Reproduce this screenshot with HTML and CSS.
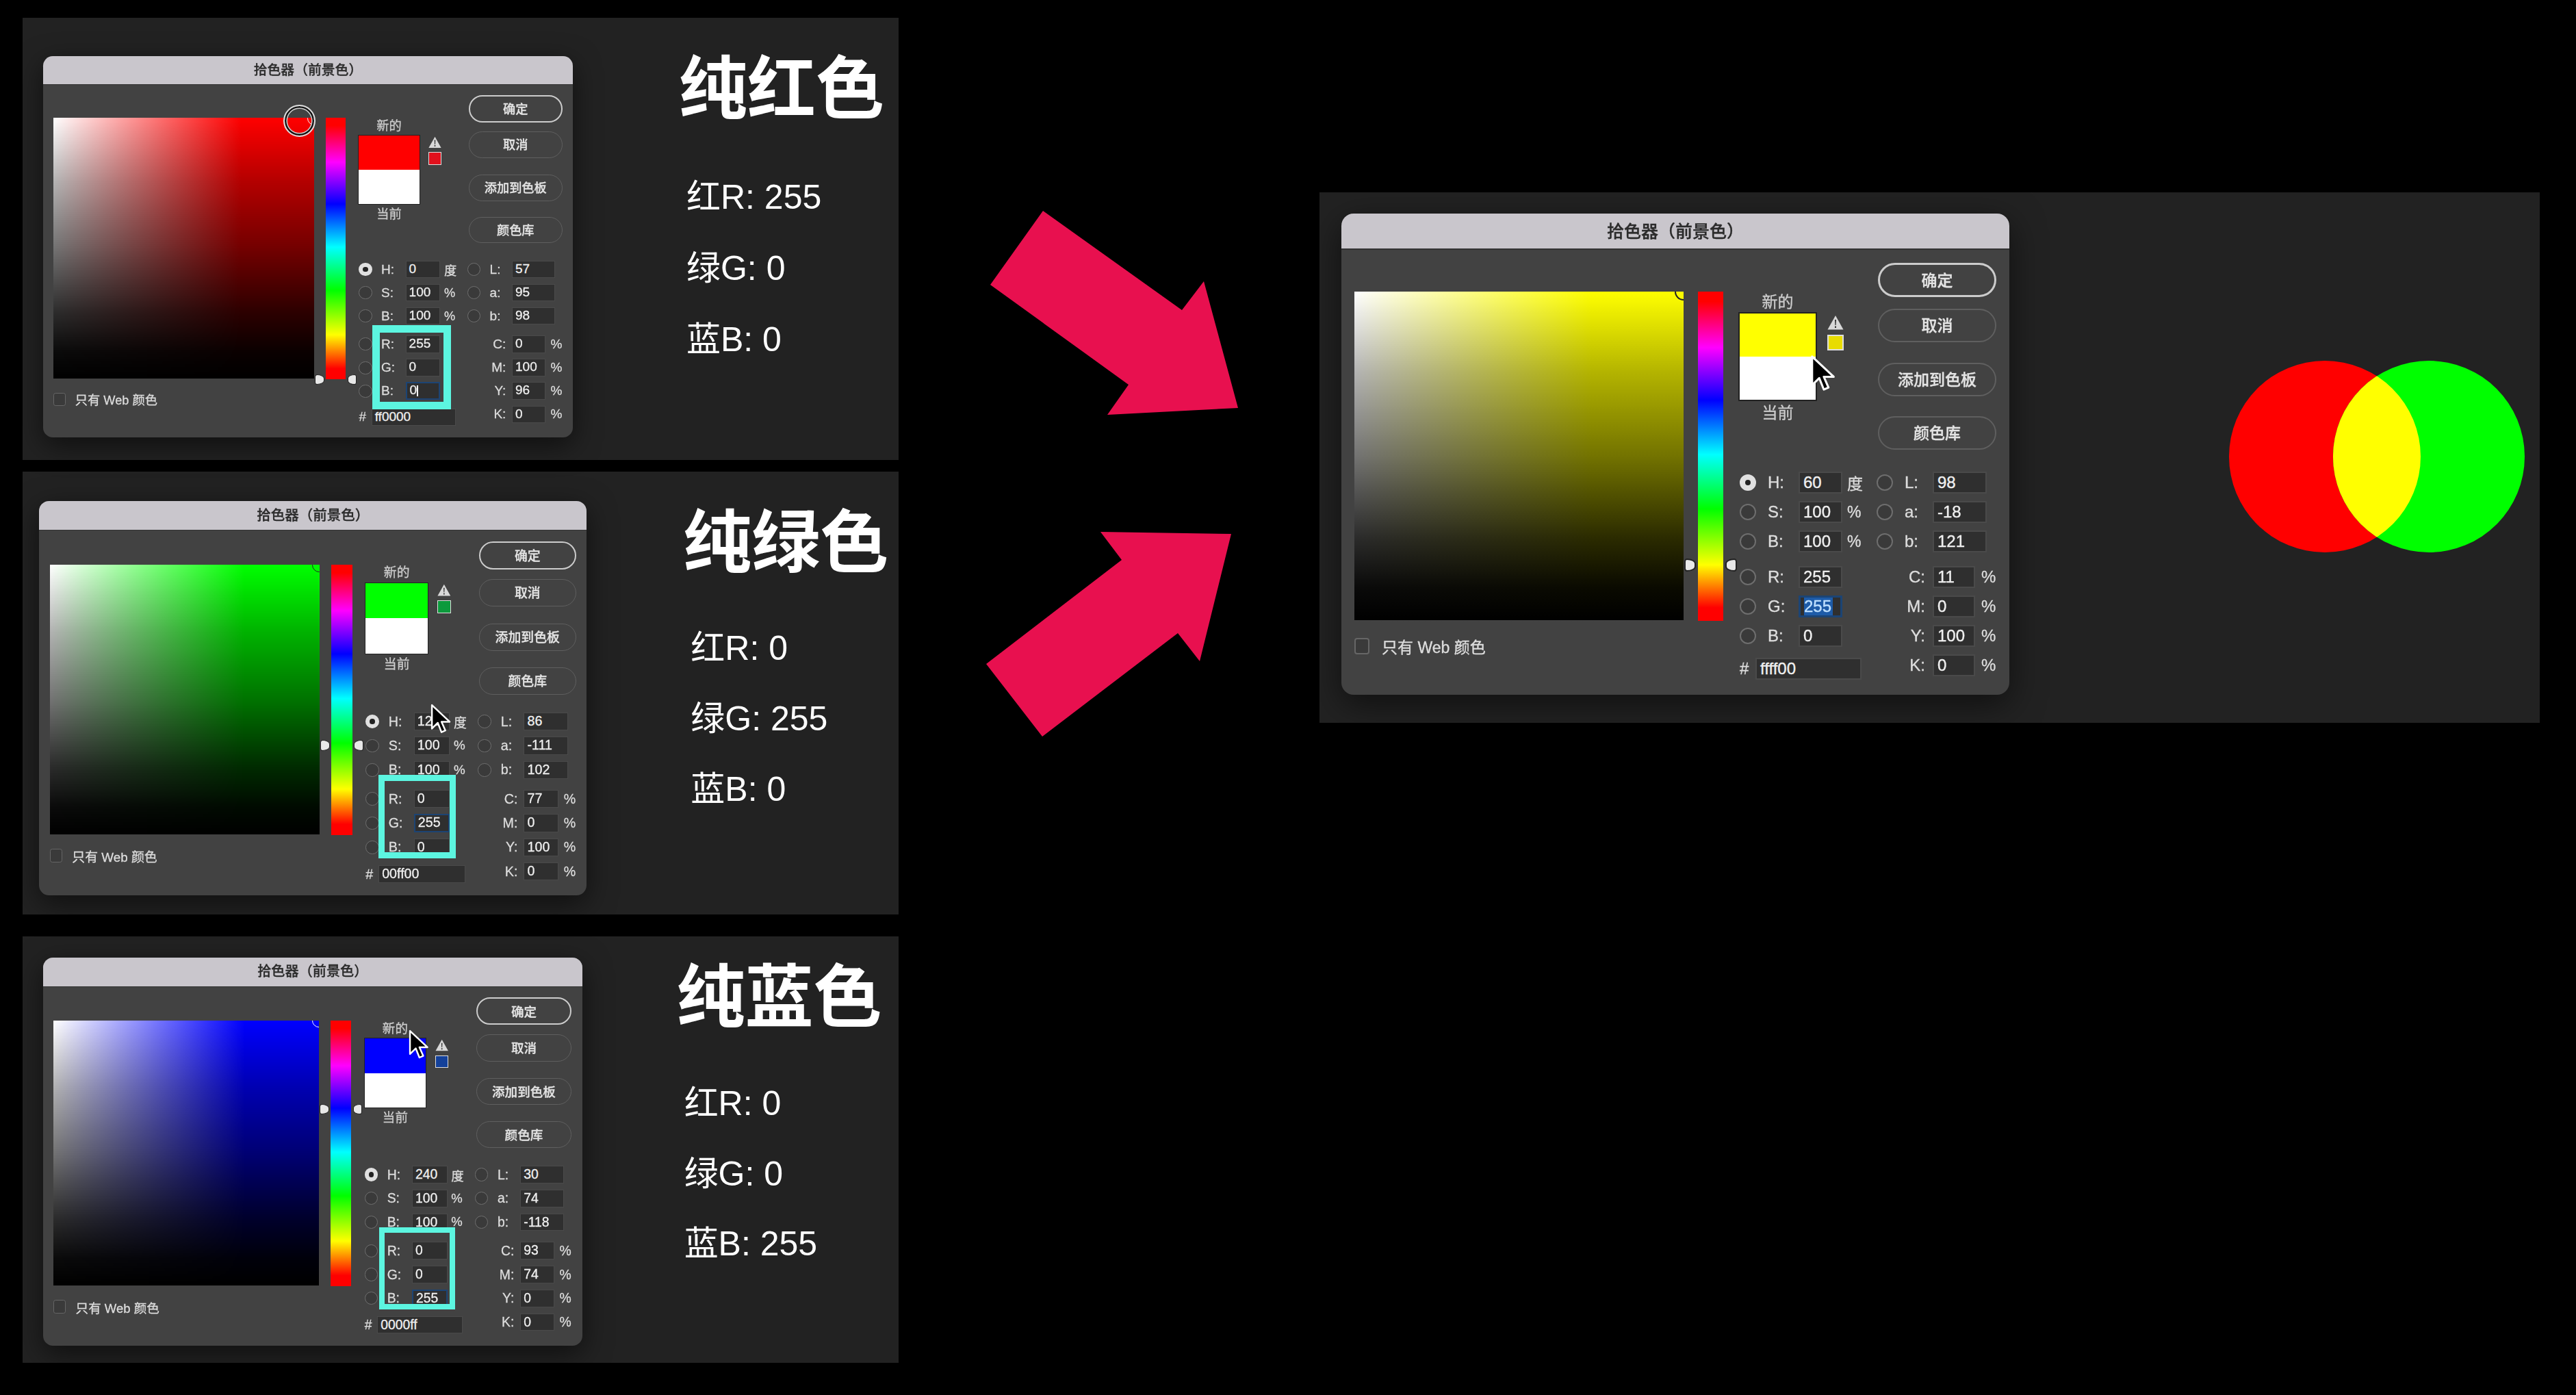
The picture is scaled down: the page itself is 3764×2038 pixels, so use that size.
FILE: index.html
```html
<!DOCTYPE html>
<html lang="zh-CN">
<head>
  <meta charset="UTF-8">
  <title>拾色器</title>
  <link rel="stylesheet" href="styles.css">
</head>
<body>

  <svg width="0" height="0" class="defs">
    <symbol id="warn" viewBox="0 0 24 22"><path d="M12 1 L23.5 21.5 H0.5 Z" fill="#d8d8d8"/><path d="M11 7 H13 L12.6 15 H11.4 Z M11 16.5 H13 V19 H11 Z" fill="#333"/></symbol>
    <symbol id="arrow" viewBox="0 0 20 30"><path d="M2 2 V24 L7.5 18.6 L11 27.4 L14.6 25.8 L11 17.6 H18.6 Z" fill="#000" stroke="#fff" stroke-width="1.6" stroke-linejoin="round"/></symbol>
  </svg>

  <div class="left-col">

    <section class="panel panel-red">
      <div class="slot">
        <div class="dialog dialog-red">
          <div class="titlebar">拾色器（前景色）</div>
          <div class="dlg-body">
            <div class="picker">
              <div class="field field-red"><i class="marker marker-light"></i></div>
              <label class="web"><i class="check"></i>只有 Web 颜色</label>
            </div>
            <div class="hue"><i class="tick tick-l" style="top:100%"></i><i class="tick tick-r" style="top:100%"></i></div>
            <div class="side">
              <div class="side-top">
                <div class="preview">
                  <div class="cap">新的</div>
                  <div class="swatches">
                    <div class="swatch"><div class="swatch-new sw-red"></div><div class="swatch-cur"></div></div>
                    <div class="gamut"><svg class="warn"><use href="#warn"/></svg><i class="gamut-sw g-red"></i></div>
                  </div>
                  <div class="cap cap-b">当前</div>
                </div>
                <div class="buttons">
                  <button class="btn btn-main">确定</button>
                  <button class="btn">取消</button>
                  <button class="btn btn-add">添加到色板</button>
                  <button class="btn btn-lib">颜色库</button>
                </div>
              </div>
              <div class="values">
                <div class="col-l">
                  <div class="row"><i class="radio on"></i><span class="lbl">H:</span><span class="inp">0</span><span class="unit">度</span></div>
                  <div class="row"><i class="radio"></i><span class="lbl">S:</span><span class="inp">100</span><span class="unit">%</span></div>
                  <div class="row"><i class="radio"></i><span class="lbl">B:</span><span class="inp">100</span><span class="unit">%</span></div>
                  <div class="row row-gap"><i class="radio"></i><span class="lbl">R:</span><span class="inp">255</span></div>
                  <div class="row"><i class="radio"></i><span class="lbl">G:</span><span class="inp">0</span></div>
                  <div class="row"><i class="radio"></i><span class="lbl">B:</span><span class="inp focus">0<i class="caret"></i></span></div>
                  <div class="row row-hex"><span class="hash">#</span><span class="inp inp-hex">ff0000</span></div>
                </div>
                <div class="col-r">
                  <div class="row"><i class="radio"></i><span class="lbl lbl-lab">L:</span><span class="inp inp-lab">57</span></div>
                  <div class="row"><i class="radio"></i><span class="lbl lbl-lab">a:</span><span class="inp inp-lab">95</span></div>
                  <div class="row"><i class="radio"></i><span class="lbl lbl-lab">b:</span><span class="inp inp-lab">98</span></div>
                  <div class="row row-gap"><span class="lbl lbl-cmyk">C:</span><span class="inp inp-cmyk">0</span><span class="unit-c">%</span></div>
                  <div class="row"><span class="lbl lbl-cmyk">M:</span><span class="inp inp-cmyk">100</span><span class="unit-c">%</span></div>
                  <div class="row"><span class="lbl lbl-cmyk">Y:</span><span class="inp inp-cmyk">96</span><span class="unit-c">%</span></div>
                  <div class="row"><span class="lbl lbl-cmyk">K:</span><span class="inp inp-cmyk">0</span><span class="unit-c">%</span></div>
                </div>
              </div>
            </div>
          </div>
          <i class="ring"></i>
          <i class="callout callout-red"></i>
        </div>
      </div>
      <div class="info">
        <h2 class="headline">纯红色</h2>
        <p class="line">红R: 255</p>
        <p class="line">绿G: 0</p>
        <p class="line">蓝B: 0</p>
      </div>
    </section>

    <section class="panel panel-green">
      <div class="slot">
        <div class="dialog dialog-green">
          <div class="titlebar">拾色器（前景色）</div>
          <div class="dlg-body">
            <div class="picker">
              <div class="field field-green"><i class="marker"></i></div>
              <label class="web"><i class="check"></i>只有 Web 颜色</label>
            </div>
            <div class="hue"><i class="tick tick-l" style="top:66.7%"></i><i class="tick tick-r" style="top:66.7%"></i></div>
            <div class="side">
              <div class="side-top">
                <div class="preview">
                  <div class="cap">新的</div>
                  <div class="swatches">
                    <div class="swatch"><div class="swatch-new sw-green"></div><div class="swatch-cur"></div></div>
                    <div class="gamut"><svg class="warn"><use href="#warn"/></svg><i class="gamut-sw g-green"></i></div>
                  </div>
                  <div class="cap cap-b">当前</div>
                </div>
                <div class="buttons">
                  <button class="btn btn-main">确定</button>
                  <button class="btn">取消</button>
                  <button class="btn btn-add">添加到色板</button>
                  <button class="btn btn-lib">颜色库</button>
                </div>
              </div>
              <div class="values">
                <div class="col-l">
                  <div class="row"><i class="radio on"></i><span class="lbl">H:</span><span class="inp">120</span><span class="unit">度</span></div>
                  <div class="row"><i class="radio"></i><span class="lbl">S:</span><span class="inp">100</span><span class="unit">%</span></div>
                  <div class="row"><i class="radio"></i><span class="lbl">B:</span><span class="inp">100</span><span class="unit">%</span></div>
                  <div class="row row-gap"><i class="radio"></i><span class="lbl">R:</span><span class="inp">0</span></div>
                  <div class="row"><i class="radio"></i><span class="lbl">G:</span><span class="inp focus">255</span></div>
                  <div class="row"><i class="radio"></i><span class="lbl">B:</span><span class="inp">0</span></div>
                  <div class="row row-hex"><span class="hash">#</span><span class="inp inp-hex">00ff00</span></div>
                </div>
                <div class="col-r">
                  <div class="row"><i class="radio"></i><span class="lbl lbl-lab">L:</span><span class="inp inp-lab">86</span></div>
                  <div class="row"><i class="radio"></i><span class="lbl lbl-lab">a:</span><span class="inp inp-lab">-111</span></div>
                  <div class="row"><i class="radio"></i><span class="lbl lbl-lab">b:</span><span class="inp inp-lab">102</span></div>
                  <div class="row row-gap"><span class="lbl lbl-cmyk">C:</span><span class="inp inp-cmyk">77</span><span class="unit-c">%</span></div>
                  <div class="row"><span class="lbl lbl-cmyk">M:</span><span class="inp inp-cmyk">0</span><span class="unit-c">%</span></div>
                  <div class="row"><span class="lbl lbl-cmyk">Y:</span><span class="inp inp-cmyk">100</span><span class="unit-c">%</span></div>
                  <div class="row"><span class="lbl lbl-cmyk">K:</span><span class="inp inp-cmyk">0</span><span class="unit-c">%</span></div>
                </div>
              </div>
            </div>
          </div>
          <i class="callout callout-green"></i>
          <svg class="cursor cursor-green"><use href="#arrow"/></svg>
        </div>
      </div>
      <div class="info">
        <h2 class="headline">纯绿色</h2>
        <p class="line">红R: 0</p>
        <p class="line">绿G: 255</p>
        <p class="line">蓝B: 0</p>
      </div>
    </section>

    <section class="panel panel-blue">
      <div class="slot">
        <div class="dialog dialog-blue">
          <div class="titlebar">拾色器（前景色）</div>
          <div class="dlg-body">
            <div class="picker">
              <div class="field field-blue"><i class="marker marker-light"></i></div>
              <label class="web"><i class="check"></i>只有 Web 颜色</label>
            </div>
            <div class="hue"><i class="tick tick-l" style="top:33.3%"></i><i class="tick tick-r" style="top:33.3%"></i></div>
            <div class="side">
              <div class="side-top">
                <div class="preview">
                  <div class="cap">新的</div>
                  <div class="swatches">
                    <div class="swatch"><div class="swatch-new sw-blue"></div><div class="swatch-cur"></div></div>
                    <div class="gamut"><svg class="warn"><use href="#warn"/></svg><i class="gamut-sw g-blue"></i></div>
                  </div>
                  <div class="cap cap-b">当前</div>
                </div>
                <div class="buttons">
                  <button class="btn btn-main">确定</button>
                  <button class="btn">取消</button>
                  <button class="btn btn-add">添加到色板</button>
                  <button class="btn btn-lib">颜色库</button>
                </div>
              </div>
              <div class="values">
                <div class="col-l">
                  <div class="row"><i class="radio on"></i><span class="lbl">H:</span><span class="inp">240</span><span class="unit">度</span></div>
                  <div class="row"><i class="radio"></i><span class="lbl">S:</span><span class="inp">100</span><span class="unit">%</span></div>
                  <div class="row"><i class="radio"></i><span class="lbl">B:</span><span class="inp">100</span><span class="unit">%</span></div>
                  <div class="row row-gap"><i class="radio"></i><span class="lbl">R:</span><span class="inp">0</span></div>
                  <div class="row"><i class="radio"></i><span class="lbl">G:</span><span class="inp">0</span></div>
                  <div class="row"><i class="radio"></i><span class="lbl">B:</span><span class="inp focus">255</span></div>
                  <div class="row row-hex"><span class="hash">#</span><span class="inp inp-hex">0000ff</span></div>
                </div>
                <div class="col-r">
                  <div class="row"><i class="radio"></i><span class="lbl lbl-lab">L:</span><span class="inp inp-lab">30</span></div>
                  <div class="row"><i class="radio"></i><span class="lbl lbl-lab">a:</span><span class="inp inp-lab">74</span></div>
                  <div class="row"><i class="radio"></i><span class="lbl lbl-lab">b:</span><span class="inp inp-lab">-118</span></div>
                  <div class="row row-gap"><span class="lbl lbl-cmyk">C:</span><span class="inp inp-cmyk">93</span><span class="unit-c">%</span></div>
                  <div class="row"><span class="lbl lbl-cmyk">M:</span><span class="inp inp-cmyk">74</span><span class="unit-c">%</span></div>
                  <div class="row"><span class="lbl lbl-cmyk">Y:</span><span class="inp inp-cmyk">0</span><span class="unit-c">%</span></div>
                  <div class="row"><span class="lbl lbl-cmyk">K:</span><span class="inp inp-cmyk">0</span><span class="unit-c">%</span></div>
                </div>
              </div>
            </div>
          </div>
          <i class="callout callout-blue"></i>
          <svg class="cursor cursor-blue"><use href="#arrow"/></svg>
        </div>
      </div>
      <div class="info">
        <h2 class="headline">纯蓝色</h2>
        <p class="line">红R: 0</p>
        <p class="line">绿G: 0</p>
        <p class="line">蓝B: 255</p>
      </div>
    </section>

  </div>

  <svg class="arrows" width="450" height="830" viewBox="0 0 450 830">
    <path d="M124 38 L327 183 L359 141 L409 326 L218 336 L249 292 L47 146 Z" fill="#e8104f"/>
    <path d="M208 507 L399 510 L353 696 L321 655 L123 806 L41 700 L239 548 Z" fill="#e8104f"/>
  </svg>

  <section class="panel panel-main">
    <div class="dialog">
      <div class="titlebar">拾色器（前景色）</div>
      <div class="dlg-body">
        <div class="picker">
          <div class="field field-yellow"><i class="marker"></i></div>
          <label class="web"><i class="check"></i>只有 Web 颜色</label>
        </div>
        <div class="hue"><i class="tick tick-l" style="top:83%"></i><i class="tick tick-r" style="top:83%"></i></div>
        <div class="side">
          <div class="side-top">
            <div class="preview">
              <div class="cap">新的</div>
              <div class="swatches">
                <div class="swatch"><div class="swatch-new sw-yellow"></div><div class="swatch-cur"></div></div>
                <div class="gamut"><svg class="warn"><use href="#warn"/></svg><i class="gamut-sw g-yellow"></i></div>
              </div>
              <div class="cap cap-b">当前</div>
            </div>
            <div class="buttons">
              <button class="btn btn-main">确定</button>
              <button class="btn">取消</button>
              <button class="btn btn-add">添加到色板</button>
              <button class="btn btn-lib">颜色库</button>
            </div>
          </div>
          <div class="values">
            <div class="col-l">
              <div class="row"><i class="radio on"></i><span class="lbl">H:</span><span class="inp">60</span><span class="unit">度</span></div>
              <div class="row"><i class="radio"></i><span class="lbl">S:</span><span class="inp">100</span><span class="unit">%</span></div>
              <div class="row"><i class="radio"></i><span class="lbl">B:</span><span class="inp">100</span><span class="unit">%</span></div>
              <div class="row row-gap"><i class="radio"></i><span class="lbl">R:</span><span class="inp">255</span></div>
              <div class="row"><i class="radio"></i><span class="lbl">G:</span><span class="inp focus"><span class="selected">255</span></span></div>
              <div class="row"><i class="radio"></i><span class="lbl">B:</span><span class="inp">0</span></div>
              <div class="row row-hex"><span class="hash">#</span><span class="inp inp-hex">ffff00</span></div>
            </div>
            <div class="col-r">
              <div class="row"><i class="radio"></i><span class="lbl lbl-lab">L:</span><span class="inp inp-lab">98</span></div>
              <div class="row"><i class="radio"></i><span class="lbl lbl-lab">a:</span><span class="inp inp-lab">-18</span></div>
              <div class="row"><i class="radio"></i><span class="lbl lbl-lab">b:</span><span class="inp inp-lab">121</span></div>
              <div class="row row-gap"><span class="lbl lbl-cmyk">C:</span><span class="inp inp-cmyk">11</span><span class="unit-c">%</span></div>
              <div class="row"><span class="lbl lbl-cmyk">M:</span><span class="inp inp-cmyk">0</span><span class="unit-c">%</span></div>
              <div class="row"><span class="lbl lbl-cmyk">Y:</span><span class="inp inp-cmyk">100</span><span class="unit-c">%</span></div>
              <div class="row"><span class="lbl lbl-cmyk">K:</span><span class="inp inp-cmyk">0</span><span class="unit-c">%</span></div>
            </div>
          </div>
        </div>
      </div>
      <svg class="cursor cursor-main"><use href="#arrow"/></svg>
    </div>
    <svg class="venn" width="432" height="280" viewBox="0 0 432 280">
      <defs><clipPath id="lens"><circle cx="292" cy="140" r="140"/></clipPath></defs>
      <circle cx="140" cy="140" r="140" fill="#ff0000"/>
      <circle cx="292" cy="140" r="140" fill="#00ff00"/>
      <circle cx="140" cy="140" r="140" fill="#ffff00" clip-path="url(#lens)"/>
    </svg>
  </section>

</body>
</html>
```

FILE: styles.css
```css
* {
  box-sizing: border-box;
}

body {
  margin: 0;
  width: 3764px;
  height: 2038px;
  overflow: hidden;
  display: flex;
  align-items: flex-start;
  background-color: #000;
  color: #fff;
  font-family: "Liberation Sans", "Noto Sans CJK SC", sans-serif;
}

.defs {
  position: absolute;
}

/* columns */
.left-col {
  width: 1280px;
  margin: 26px 0 0 33px;
  display: flex;
  flex-direction: column;
}

.arrows {
  flex: none;
  margin: 270px 0 0 87px;
}

.panel {
  display: flex;
  align-items: flex-start;
  background-color: #222;
}

.panel-red {
  height: 646px;
}

.panel-green {
  height: 647px;
  margin-top: 17px;
}

.panel-blue {
  height: 623px;
  margin-top: 32px;
}

.panel-main {
  width: 1783px;
  height: 775px;
  margin: 281px 0 0 78px;
  padding: 31px 0 0 32px;
}

.panel-red .slot {
  margin: 56px 155px 0 30px;
}

.panel-green .slot {
  margin: 43px 141px 0 24px;
}

.panel-blue .slot {
  margin: 31px 138px 0 30px;
}

/* text beside the dialogs */
.info {
  margin-top: 46px;
}

.panel-blue .info {
  margin-top: 31px;
}

.headline {
  margin: 0 0 91px;
  font-family: "Noto Sans CJK SC", sans-serif;
  font-size: 100px;
  line-height: 100px;
  font-weight: 700;
}

.panel-green .headline {
  margin-bottom: 87px;
}

.panel-blue .headline {
  margin-bottom: 88px;
}

.line {
  margin: 0 0 54px 11px;
  font-size: 50px;
  line-height: 50px;
  white-space: nowrap;
}

.panel-green .line {
  margin-bottom: 53px;
}

.panel-blue .line {
  margin-bottom: 52.5px;
}

/* colour picker dialog */
.dialog {
  position: relative;
  width: 976px;
  height: 703px;
  flex: none;
  background-color: #424242;
  border-radius: 18px;
  box-shadow: 0 14px 50px rgba(0, 0, 0, 0.55);
  -webkit-text-stroke: 0.35px;
  filter: blur(0.5px);
}

.dialog-red {
  zoom: 0.793;
}

.dialog-green {
  zoom: 0.82;
}

.dialog-blue {
  zoom: 0.807;
}

.titlebar {
  height: 53px;
  background-color: #c9c6cc;
  border-bottom: 2px solid #333;
  border-radius: 18px 18px 0 0;
  color: #2b2b2b;
  font-size: 25px;
  font-weight: 500;
  line-height: 52px;
  text-align: center;
}

.dlg-body {
  display: flex;
  padding-left: 19px;
}

.picker {
  width: 481px;
  padding-top: 61px;
}

.field {
  position: relative;
  height: 480px;
  overflow: hidden;
  background:
    linear-gradient(to bottom, transparent, rgba(0, 0, 0, 0.3) 25%, rgba(0, 0, 0, 0.55) 50%, rgba(0, 0, 0, 0.83) 75%, rgba(0, 0, 0, 0.96) 90%, #000),
    linear-gradient(to right, #fff, var(--hue) 72%);
}

.field-red {
  --hue: #f00;
}

.field-green {
  --hue: #0f0;
}

.field-blue {
  --hue: #00f;
}

.field-yellow {
  --hue: #ff0;
}

.marker {
  position: absolute;
  top: -13px;
  right: -13px;
  width: 26px;
  height: 26px;
  border: 2px solid #222;
  border-radius: 50%;
}

.marker-light {
  border-color: #fff;
}

.web {
  display: flex;
  align-items: center;
  height: 24px;
  margin-top: 26px;
  color: #ddd;
  font-size: 23px;
}

.check {
  width: 22px;
  height: 24px;
  margin-right: 18px;
  border: 2px solid #666;
  border-radius: 4px;
  background-color: #3a3a3a;
}

.hue {
  position: relative;
  flex: none;
  width: 37px;
  height: 481px;
  margin: 61px 24px 0 21px;
  background: linear-gradient(to bottom, #f00 3%, #f0f 17%, #00f 33%, #0ff 49.5%, #0f0 66%, #ff0 83%, #f00 96%);
}

.tick {
  position: absolute;
  width: 17px;
  height: 19px;
  margin-top: -9px;
  background-color: #e8e8e8;
  border: 2px solid #222;
}

.tick-l {
  left: -20px;
  border-radius: 30% 100% 100% 30% / 30% 50% 50% 30%;
}

.tick-r {
  right: -20px;
  border-radius: 100% 30% 30% 100% / 50% 30% 30% 50%;
}

.side {
  width: 376px;
}

.side-top {
  display: flex;
  padding-top: 19px;
}

.preview {
  width: 202px;
  padding-top: 42px;
}

.cap {
  width: 111px;
  height: 32px;
  color: #ccc;
  font-size: 23px;
  line-height: 30px;
  text-align: center;
}

.cap-b {
  line-height: 38px;
}

.swatches {
  display: flex;
}

.swatch {
  width: 111px;
  height: 126px;
  outline: 2px solid #222;
}

.swatch-new,
.swatch-cur {
  height: 63px;
}

.swatch-cur {
  background-color: #fff;
}

.sw-red {
  background-color: #f00;
}

.sw-green {
  background-color: #0f0;
}

.sw-blue {
  background-color: #00f;
}

.sw-yellow {
  background-color: #ff0;
}

.gamut {
  margin: 2px 0 0 17px;
}

.warn {
  display: block;
  width: 24px;
  height: 22px;
}

.gamut-sw {
  display: block;
  width: 24px;
  height: 23px;
  margin-top: 7px;
  border: 2px solid #ddd;
}

.g-red {
  background-color: #e0101c;
}

.g-green {
  background-color: #0c9a3c;
}

.g-blue {
  background-color: #14419a;
}

.g-yellow {
  background-color: #e8dc00;
}

.buttons {
  width: 173px;
}

.btn {
  display: block;
  width: 173px;
  height: 49px;
  padding: 0 0 3px;
  background: none;
  border: 2px solid #5f5f5f;
  border-radius: 25px;
  color: #e4e4e4;
  font-family: inherit;
  font-size: 23px;
  font-weight: 500;
  -webkit-text-stroke: 0.35px;
}

.btn + .btn {
  margin-top: 17px;
}

.btn-main {
  height: 50px;
  border: 3px solid #ccc;
}

.btn + .btn-add {
  margin-top: 30px;
}

.btn + .btn-lib {
  margin-top: 29px;
}

.values {
  display: flex;
  margin-top: 32px;
}

.col-l {
  width: 200px;
}

.row {
  display: flex;
  align-items: center;
  height: 32px;
  margin-bottom: 11px;
  color: #ddd;
  font-size: 24px;
}

.row-gap {
  margin-top: 20px;
}

.row-hex {
  margin-top: 16px;
}

.radio {
  flex: none;
  width: 24px;
  height: 24px;
  margin-right: 17px;
  border: 2px solid #6e6e6e;
  border-radius: 50%;
  background-color: #3a3a3a;
}

.radio.on {
  border: 8px solid #e0e0e0;
  background-color: #222;
}

.lbl {
  width: 45px;
}

.lbl-lab {
  width: 41px;
}

.lbl-cmyk {
  width: 71px;
  margin-right: 11px;
  text-align: right;
}

.inp {
  position: relative;
  width: 64px;
  height: 32px;
  padding-left: 5px;
  background-color: #2f2f2f;
  border: 2px solid #4a4a4a;
  color: #f0f0f0;
  line-height: 28px;
}

.inp-lab {
  width: 79px;
}

.inp-cmyk {
  width: 62px;
}

.inp-hex {
  width: 155px;
}

.unit {
  margin-left: 7px;
  font-size: 23px;
}

.unit-c {
  margin-left: 9px;
}

.hash {
  width: 23px;
}

.focus {
  border: 3px solid #1c4474;
  line-height: 26px;
}

.caret {
  position: absolute;
  top: 3px;
  width: 2px;
  height: 20px;
  background-color: #fff;
}

.selected {
  display: inline-block;
  height: 26px;
  padding-right: 2px;
  background-color: #1d5ba8;
  color: #bfe0ff;
}

/* things lying over a dialog */
.ring {
  position: absolute;
  left: 442px;
  top: 89px;
  width: 60px;
  height: 60px;
  border: 3px solid #ddd;
  border-radius: 50%;
  box-shadow: inset 0 0 0 3px #111, inset 0 0 0 5px #ccc;
}

.callout {
  position: absolute;
  border-style: solid;
  border-color: #5cf5e0;
}

.callout-red {
  left: 607px;
  top: 495px;
  width: 144px;
  height: 156px;
  border-width: 14px;
}

.callout-green {
  left: 605px;
  top: 488px;
  width: 138px;
  height: 149px;
  border-width: 11px;
}

.callout-blue {
  left: 608px;
  top: 488px;
  width: 138px;
  height: 149px;
  border-width: 11px;
}

.cursor {
  position: absolute;
  width: 38px;
  height: 57px;
}

.cursor-main {
  left: 684px;
  top: 205px;
}

.cursor-green {
  left: 696px;
  top: 360px;
}

.cursor-blue {
  left: 661px;
  top: 129px;
}

.venn {
  flex: none;
  margin: 215px 0 0 321px;
}
```
